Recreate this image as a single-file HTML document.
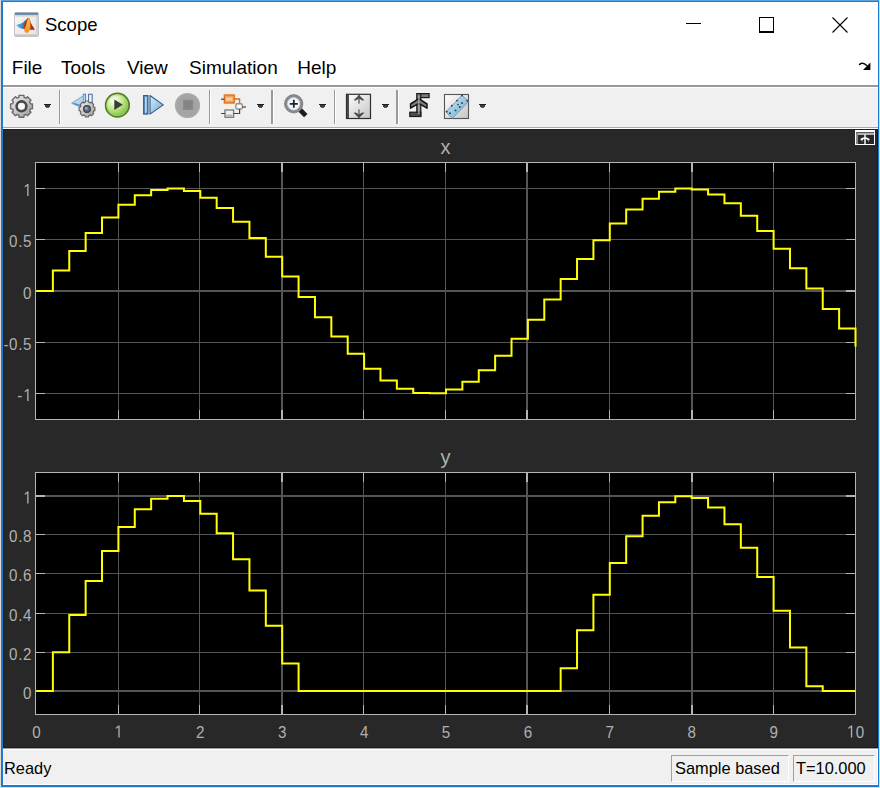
<!DOCTYPE html>
<html><head><meta charset="utf-8">
<style>
html,body{margin:0;padding:0;}
body{width:880px;height:788px;overflow:hidden;position:relative;background:#e3d9d0;font-family:"Liberation Sans",sans-serif;}
.a{position:absolute;}
.t{position:absolute;white-space:nowrap;color:#000;line-height:1;}
</style></head><body>
<div class="a" style="left:1px;top:0;width:878px;height:787px;background:#1a7ad4"></div>
<div class="a" style="left:1px;top:0;width:878px;height:1px;background:#5aa2e2"></div>
<div class="a" style="left:3px;top:2px;width:875px;height:783px;background:#fff"></div>
<!-- menu separator -->
<div class="a" style="left:3px;top:85px;width:875px;height:2px;background:#9a9a9a"></div>
<div class="a" style="left:3px;top:88px;width:875px;height:39px;background:#f0f0f0"></div>
<div class="a" style="left:3px;top:127px;width:875px;height:1px;background:#a8a8a8"></div>
<!-- scope panel -->
<div class="a" style="left:3px;top:129px;width:875px;height:619px;background:#1e1b18"></div>
<div class="a" style="left:4px;top:130px;width:873px;height:617px;background:#282828"></div>
<!-- status -->
<div class="a" style="left:3px;top:748px;width:875px;height:1px;background:#a0a0a0"></div>
<div class="a" style="left:3px;top:750px;width:874px;height:34px;background:#f0f0f0"></div>
<svg id="plot" width="880" height="788" viewBox="0 0 880 788" style="position:absolute;left:0;top:0">
<g shape-rendering="crispEdges">
<rect x="35" y="162" width="821" height="258" fill="#000"/>
<rect x="118" y="163" width="1" height="256" fill="#555555"/>
<rect x="199" y="163" width="1" height="256" fill="#555555"/>
<rect x="281" y="163" width="2" height="256" fill="#555555"/>
<rect x="363" y="163" width="1" height="256" fill="#555555"/>
<rect x="445" y="163" width="1" height="256" fill="#555555"/>
<rect x="526" y="163" width="2" height="256" fill="#555555"/>
<rect x="609" y="163" width="1" height="256" fill="#555555"/>
<rect x="691" y="163" width="2" height="256" fill="#555555"/>
<rect x="773" y="163" width="1" height="256" fill="#555555"/>
<rect x="36" y="188" width="819" height="1" fill="#555555"/>
<rect x="36" y="239" width="819" height="1" fill="#555555"/>
<rect x="36" y="290" width="819" height="2" fill="#555555"/>
<rect x="36" y="342" width="819" height="1" fill="#555555"/>
<rect x="36" y="393" width="819" height="1" fill="#555555"/>
<rect x="118" y="163" width="1" height="9" fill="#b4b4b4"/>
<rect x="118" y="410" width="1" height="9" fill="#b4b4b4"/>
<rect x="199" y="163" width="1" height="9" fill="#b4b4b4"/>
<rect x="199" y="410" width="1" height="9" fill="#b4b4b4"/>
<rect x="281" y="163" width="2" height="9" fill="#b4b4b4"/>
<rect x="281" y="410" width="2" height="9" fill="#b4b4b4"/>
<rect x="363" y="163" width="1" height="9" fill="#b4b4b4"/>
<rect x="363" y="410" width="1" height="9" fill="#b4b4b4"/>
<rect x="445" y="163" width="1" height="9" fill="#b4b4b4"/>
<rect x="445" y="410" width="1" height="9" fill="#b4b4b4"/>
<rect x="526" y="163" width="2" height="9" fill="#b4b4b4"/>
<rect x="526" y="410" width="2" height="9" fill="#b4b4b4"/>
<rect x="609" y="163" width="1" height="9" fill="#b4b4b4"/>
<rect x="609" y="410" width="1" height="9" fill="#b4b4b4"/>
<rect x="691" y="163" width="2" height="9" fill="#b4b4b4"/>
<rect x="691" y="410" width="2" height="9" fill="#b4b4b4"/>
<rect x="773" y="163" width="1" height="9" fill="#b4b4b4"/>
<rect x="773" y="410" width="1" height="9" fill="#b4b4b4"/>
<rect x="36" y="188" width="9" height="1" fill="#b4b4b4"/>
<rect x="846" y="188" width="9" height="1" fill="#b4b4b4"/>
<rect x="36" y="239" width="9" height="1" fill="#b4b4b4"/>
<rect x="846" y="239" width="9" height="1" fill="#b4b4b4"/>
<rect x="36" y="290" width="9" height="2" fill="#b4b4b4"/>
<rect x="846" y="290" width="9" height="2" fill="#b4b4b4"/>
<rect x="36" y="342" width="9" height="1" fill="#b4b4b4"/>
<rect x="846" y="342" width="9" height="1" fill="#b4b4b4"/>
<rect x="36" y="393" width="9" height="1" fill="#b4b4b4"/>
<rect x="846" y="393" width="9" height="1" fill="#b4b4b4"/>
<rect x="35.5" y="162.5" width="820" height="257" fill="none" stroke="#b4b4b4" stroke-width="1"/>

</g>
<path d="M36.50,291.00 H52.88 V270.62 H69.26 V251.05 H85.64 V233.07 H102.02 V217.40 H118.40 V204.67 H134.78 V195.37 H151.16 V189.89 H167.54 V188.44 H183.92 V191.08 H200.30 V197.71 H216.68 V208.05 H233.06 V221.70 H249.44 V238.11 H265.82 V256.63 H282.20 V276.52 H298.58 V296.99 H314.96 V317.22 H331.34 V336.40 H347.72 V353.78 H364.10 V368.65 H380.48 V380.42 H396.86 V388.63 H413.24 V392.95 H429.62 V393.21 H446.00 V389.39 H462.38 V381.64 H478.76 V370.29 H495.14 V355.77 H511.52 V338.67 H527.90 V319.67 H544.28 V299.52 H560.66 V279.04 H577.04 V259.04 H593.42 V240.30 H609.80 V223.59 H626.18 V209.57 H642.56 V198.79 H658.94 V191.69 H675.32 V188.55 H691.70 V189.49 H708.08 V194.48 H724.46 V203.32 H740.84 V215.65 H757.22 V230.99 H773.60 V248.72 H789.98 V268.13 H806.36 V288.46 H822.74 V308.89 H839.12 V328.60 H855.50 V346.82" fill="none" stroke="#ffff00" stroke-width="2" stroke-linejoin="miter"/>
<g shape-rendering="crispEdges">
<rect x="35" y="472" width="821" height="243" fill="#000"/>
<rect x="118" y="473" width="1" height="241" fill="#555555"/>
<rect x="199" y="473" width="1" height="241" fill="#555555"/>
<rect x="281" y="473" width="2" height="241" fill="#555555"/>
<rect x="363" y="473" width="1" height="241" fill="#555555"/>
<rect x="445" y="473" width="1" height="241" fill="#555555"/>
<rect x="526" y="473" width="2" height="241" fill="#555555"/>
<rect x="609" y="473" width="1" height="241" fill="#555555"/>
<rect x="691" y="473" width="2" height="241" fill="#555555"/>
<rect x="773" y="473" width="1" height="241" fill="#555555"/>
<rect x="36" y="495" width="819" height="2" fill="#555555"/>
<rect x="36" y="534" width="819" height="1" fill="#555555"/>
<rect x="36" y="573" width="819" height="1" fill="#555555"/>
<rect x="36" y="613" width="819" height="1" fill="#555555"/>
<rect x="36" y="652" width="819" height="1" fill="#555555"/>
<rect x="36" y="690" width="819" height="2" fill="#555555"/>
<rect x="118" y="473" width="1" height="9" fill="#b4b4b4"/>
<rect x="118" y="705" width="1" height="9" fill="#b4b4b4"/>
<rect x="199" y="473" width="1" height="9" fill="#b4b4b4"/>
<rect x="199" y="705" width="1" height="9" fill="#b4b4b4"/>
<rect x="281" y="473" width="2" height="9" fill="#b4b4b4"/>
<rect x="281" y="705" width="2" height="9" fill="#b4b4b4"/>
<rect x="363" y="473" width="1" height="9" fill="#b4b4b4"/>
<rect x="363" y="705" width="1" height="9" fill="#b4b4b4"/>
<rect x="445" y="473" width="1" height="9" fill="#b4b4b4"/>
<rect x="445" y="705" width="1" height="9" fill="#b4b4b4"/>
<rect x="526" y="473" width="2" height="9" fill="#b4b4b4"/>
<rect x="526" y="705" width="2" height="9" fill="#b4b4b4"/>
<rect x="609" y="473" width="1" height="9" fill="#b4b4b4"/>
<rect x="609" y="705" width="1" height="9" fill="#b4b4b4"/>
<rect x="691" y="473" width="2" height="9" fill="#b4b4b4"/>
<rect x="691" y="705" width="2" height="9" fill="#b4b4b4"/>
<rect x="773" y="473" width="1" height="9" fill="#b4b4b4"/>
<rect x="773" y="705" width="1" height="9" fill="#b4b4b4"/>
<rect x="36" y="495" width="9" height="2" fill="#b4b4b4"/>
<rect x="846" y="495" width="9" height="2" fill="#b4b4b4"/>
<rect x="36" y="534" width="9" height="1" fill="#b4b4b4"/>
<rect x="846" y="534" width="9" height="1" fill="#b4b4b4"/>
<rect x="36" y="573" width="9" height="1" fill="#b4b4b4"/>
<rect x="846" y="573" width="9" height="1" fill="#b4b4b4"/>
<rect x="36" y="613" width="9" height="1" fill="#b4b4b4"/>
<rect x="846" y="613" width="9" height="1" fill="#b4b4b4"/>
<rect x="36" y="652" width="9" height="1" fill="#b4b4b4"/>
<rect x="846" y="652" width="9" height="1" fill="#b4b4b4"/>
<rect x="36" y="690" width="9" height="2" fill="#b4b4b4"/>
<rect x="846" y="690" width="9" height="2" fill="#b4b4b4"/>
<rect x="35.5" y="472.5" width="820" height="242" fill="none" stroke="#b4b4b4" stroke-width="1"/>

</g>
<path d="M36.50,691.00 H52.88 V652.26 H69.26 V615.06 H85.64 V580.89 H102.02 V551.12 H118.40 V526.91 H134.78 V509.25 H151.16 V498.84 H167.54 V496.08 H183.92 V501.10 H200.30 V513.69 H216.68 V533.34 H233.06 V559.28 H249.44 V590.48 H265.82 V625.68 H282.20 V663.48 H298.58 V691.00 H314.96 V691.00 H331.34 V691.00 H347.72 V691.00 H364.10 V691.00 H380.48 V691.00 H396.86 V691.00 H413.24 V691.00 H429.62 V691.00 H446.00 V691.00 H462.38 V691.00 H478.76 V691.00 H495.14 V691.00 H511.52 V691.00 H527.90 V691.00 H544.28 V691.00 H560.66 V668.27 H577.04 V630.25 H593.42 V594.65 H609.80 V562.89 H626.18 V536.23 H642.56 V515.75 H658.94 V502.26 H675.32 V496.28 H691.70 V498.08 H708.08 V507.56 H724.46 V524.35 H740.84 V547.79 H757.22 V576.94 H773.60 V610.64 H789.98 V647.54 H806.36 V686.17 H822.74 V691.00 H839.12 V691.00 H855.50 V691.00" fill="none" stroke="#ffff00" stroke-width="2" stroke-linejoin="miter"/>
<g font-family="'Liberation Sans', sans-serif" font-size="16.5" fill="#b0b0b0" stroke="none">
<path transform="translate(23.058,196.00) scale(0.007412,-0.008459)" d="M560,0 L740,0 L740,1409 L585,1409 L230,1180 L230,1010 L560,1225 Z"/>
<text transform="translate(9.110,247.00) scale(0.92,1.05)">0</text><text transform="translate(18.196,247.00) scale(0.92,1.05)">.</text><text transform="translate(23.058,247.00) scale(0.92,1.05)">5</text>
<text transform="translate(23.058,298.50) scale(0.92,1.05)">0</text>
<text transform="translate(3.411,350.00) scale(0.92,1.05)">-</text><text transform="translate(9.110,350.00) scale(0.92,1.05)">0</text><text transform="translate(18.196,350.00) scale(0.92,1.05)">.</text><text transform="translate(23.058,350.00) scale(0.92,1.05)">5</text>
<text transform="translate(17.359,401.00) scale(0.92,1.05)">-</text><path transform="translate(23.058,401.00) scale(0.007412,-0.008459)" d="M560,0 L740,0 L740,1409 L585,1409 L230,1180 L230,1010 L560,1225 Z"/>
<path transform="translate(23.058,503.50) scale(0.007412,-0.008459)" d="M560,0 L740,0 L740,1409 L585,1409 L230,1180 L230,1010 L560,1225 Z"/>
<text transform="translate(9.110,542.00) scale(0.92,1.05)">0</text><text transform="translate(18.196,542.00) scale(0.92,1.05)">.</text><text transform="translate(23.058,542.00) scale(0.92,1.05)">8</text>
<text transform="translate(9.110,581.00) scale(0.92,1.05)">0</text><text transform="translate(18.196,581.00) scale(0.92,1.05)">.</text><text transform="translate(23.058,581.00) scale(0.92,1.05)">6</text>
<text transform="translate(9.110,620.50) scale(0.92,1.05)">0</text><text transform="translate(18.196,620.50) scale(0.92,1.05)">.</text><text transform="translate(23.058,620.50) scale(0.92,1.05)">4</text>
<text transform="translate(9.110,659.50) scale(0.92,1.05)">0</text><text transform="translate(18.196,659.50) scale(0.92,1.05)">.</text><text transform="translate(23.058,659.50) scale(0.92,1.05)">2</text>
<text transform="translate(23.058,698.50) scale(0.92,1.05)">0</text>
<text transform="translate(32.279,737.50) scale(0.92,1.05)">0</text>
<path transform="translate(114.179,737.50) scale(0.007412,-0.008459)" d="M560,0 L740,0 L740,1409 L585,1409 L230,1180 L230,1010 L560,1225 Z"/>
<text transform="translate(196.079,737.50) scale(0.92,1.05)">2</text>
<text transform="translate(277.979,737.50) scale(0.92,1.05)">3</text>
<text transform="translate(359.879,737.50) scale(0.92,1.05)">4</text>
<text transform="translate(441.779,737.50) scale(0.92,1.05)">5</text>
<text transform="translate(523.679,737.50) scale(0.92,1.05)">6</text>
<text transform="translate(605.579,737.50) scale(0.92,1.05)">7</text>
<text transform="translate(687.479,737.50) scale(0.92,1.05)">8</text>
<text transform="translate(769.379,737.50) scale(0.92,1.05)">9</text>
<path transform="translate(846.736,737.50) scale(0.007412,-0.008459)" d="M560,0 L740,0 L740,1409 L585,1409 L230,1180 L230,1010 L560,1225 Z"/><text transform="translate(855.822,737.50) scale(0.92,1.05)">0</text>
<text x="445.5" y="154" text-anchor="middle" font-size="20">x</text>
<text x="445.5" y="464" text-anchor="middle" font-size="20">y</text>
</g>
</svg>
<!-- title bar -->
<svg class="a" style="left:14px;top:12px" width="25" height="25" viewBox="0 0 25 25">
  <defs>
    <linearGradient id="wbody" x1="0" y1="0" x2="1" y2="1"><stop offset="0" stop-color="#fafafa"/><stop offset="1" stop-color="#e0e0e0"/></linearGradient>
    <linearGradient id="wtop" x1="0" y1="0" x2="0" y2="1"><stop offset="0" stop-color="#4a76a0"/><stop offset="1" stop-color="#88a8c4"/></linearGradient>
    <linearGradient id="mblue" x1="0" y1="0" x2="1" y2="0"><stop offset="0" stop-color="#70b8ea"/><stop offset="0.6" stop-color="#3a88cc"/><stop offset="1" stop-color="#2a62a8"/></linearGradient>
    <linearGradient id="morange" x1="0" y1="0" x2="0" y2="1"><stop offset="0" stop-color="#f8c040"/><stop offset="1" stop-color="#f09020"/></linearGradient>
  </defs>
  <rect x="0.5" y="0.5" width="24" height="24" rx="1.2" fill="url(#wbody)" stroke="#c4c4c4"/>
  <rect x="1" y="0.8" width="23" height="2.6" fill="url(#wtop)"/>
  <rect x="1" y="3.4" width="23" height="1.2" fill="#d2d2d2"/>
  <rect x="1" y="22.4" width="23" height="1.8" fill="#c6c6c6"/>
  <rect x="22" y="4.6" width="2" height="17.8" fill="#d4d4d4"/>
  <path d="M2.3,13.5 C3.5,12.5 5,12 7,11.5 C8.5,11 10,9.5 11.8,8 L12.8,8 L12.8,15.8 C11,16.6 9.5,17 8,16.8 C6,16.3 4,15 2.3,13.5Z" fill="url(#mblue)"/>
  <path d="M9,16.2 C10,13 11,10 12.5,7.5 C13,6.5 13.8,5.8 14.5,5.8 C15.5,6 16,8 16.8,10.5 C17.5,12.5 18.5,14 19.5,15.5 C20,16.3 20.3,17 20.5,17.8 C19.5,17.5 18.5,17.2 17.5,17.5 C16.5,18 15.5,18 14.5,18 C12,18 10.5,17.5 9,16.2Z" fill="#c03a1c"/>
  <path d="M11,12 C11.8,9.5 12.8,7 13.8,6 L13.6,15 L10.5,15.5Z" fill="#9a2a1a"/>
  <path d="M12.5,11 C13,8.5 13.8,6.2 14.6,6 C15.8,7.5 16.4,10.5 16.5,13.5 C16.5,16 16,18 15,19.5 C14.5,20.5 13.5,21 12.5,20.8 C10.8,20.5 10.2,19.5 10.3,18 C10.8,16 12,14 12.5,11Z" fill="url(#morange)"/>
  <path d="M16.8,11 C17.5,13 18.5,14.5 19.5,15.8 C20,16.5 20.3,17.2 20.5,17.8 C19.5,17.5 18.2,17.2 17,17.6Z" fill="#b02a18"/>
</svg>
<div class="t" style="left:45px;top:16.3px;font-size:18.5px">Scope</div>
<div class="a" style="left:686px;top:23px;width:15px;height:1px;background:#000"></div>
<div class="a" style="left:759px;top:17px;width:13px;height:13px;border:1px solid #000;border-bottom-width:2px"></div>
<svg class="a" style="left:832px;top:17px" width="16" height="16" viewBox="0 0 16 16"><path d="M0.5,0.5 L15.5,15.5 M15.5,0.5 L0.5,15.5" stroke="#000" stroke-width="1.1" fill="none"/></svg>
<!-- menu -->
<div class="t" style="left:11.8px;top:58px;font-size:19px">File</div>
<div class="t" style="left:61px;top:58px;font-size:19px">Tools</div>
<div class="t" style="left:127px;top:58px;font-size:19px">View</div>
<div class="t" style="left:189px;top:58px;font-size:19px">Simulation</div>
<div class="t" style="left:297.2px;top:58px;font-size:19px">Help</div>
<svg class="a" style="left:856px;top:58px" width="18" height="16" viewBox="856 58 18 16"><path d="M859.3,65 C860.5,62.8 863.5,62.3 867,65.8" stroke="#000" stroke-width="1.6" fill="none"/><path d="M870.4,62.4 L870.4,70 L863,70 Z" fill="#000"/></svg>
<!-- status bar -->
<div class="t" style="left:4px;top:759.8px;font-size:16.4px">Ready</div>
<div class="a" style="left:671px;top:755px;width:118px;height:27px;border-top:1px solid #a0a0a0;border-left:1px solid #a0a0a0;border-bottom:1px solid #fff;border-right:1px solid #fff;box-sizing:border-box"></div>
<div class="t" style="left:675px;top:759.8px;font-size:16.4px">Sample based</div>
<div class="a" style="left:793px;top:755px;width:82px;height:27px;border-top:1px solid #a0a0a0;border-left:1px solid #a0a0a0;border-bottom:1px solid #fff;border-right:1px solid #fff;box-sizing:border-box"></div>
<div class="t" style="left:796px;top:759.8px;font-size:16.4px">T=10.000</div>
<!-- undock icon -->
<svg class="a" style="left:850px;top:126px" width="28" height="22" viewBox="850 126 28 22" shape-rendering="crispEdges">
<rect x="855" y="130" width="20" height="15" fill="#ffffff"/>
<rect x="856" y="132" width="18" height="12" fill="#282828"/>
<rect x="856" y="132" width="18" height="1" fill="#585858"/>
<rect x="856" y="133" width="18" height="2" fill="#b2b2b2"/>
<rect x="856" y="133" width="2" height="11" fill="#8a8a8a"/>
<rect x="864" y="134" width="2" height="10" fill="#c4c4c4"/>
<rect x="862" y="141" width="1" height="1" fill="#707070"/>
<rect x="868" y="141" width="1" height="1" fill="#707070"/>
</svg>
<svg class="a" style="left:850px;top:126px" width="28" height="22" viewBox="850 126 28 22">
<path d="M861.5,140 C862.5,137.5 867.5,137.5 868.5,140" fill="none" stroke="#fff" stroke-width="1.7"/>
<circle cx="861.6" cy="139.4" r="1.1" fill="#fff"/><circle cx="868.6" cy="139.6" r="1" fill="#f0f0f0"/>
</svg>
<svg class="a" style="left:0;top:0" width="500" height="128" viewBox="0 0 500 128">
<defs>
  <linearGradient id="gGear" x1="0" y1="0" x2="1" y2="1"><stop offset="0" stop-color="#f2f2f2"/><stop offset="0.5" stop-color="#c8c8c8"/><stop offset="1" stop-color="#9a9a9a"/></linearGradient>
  <radialGradient id="gPlay" cx="0.35" cy="0.3" r="0.75"><stop offset="0" stop-color="#ffffff"/><stop offset="0.45" stop-color="#c8ec90"/><stop offset="1" stop-color="#74b83a"/></radialGradient>
  <linearGradient id="gBlue" x1="0" y1="0" x2="1" y2="1"><stop offset="0" stop-color="#d8eefa"/><stop offset="1" stop-color="#6aa8d8"/></linearGradient>
  <linearGradient id="gOr" x1="0" y1="0" x2="0" y2="1"><stop offset="0" stop-color="#f8c890"/><stop offset="1" stop-color="#e88840"/></linearGradient>
  <linearGradient id="gBox" x1="0" y1="0" x2="1" y2="1"><stop offset="0" stop-color="#ffffff"/><stop offset="1" stop-color="#c4c4c4"/></linearGradient>
  <linearGradient id="gRuler" x1="0" y1="0" x2="1" y2="1"><stop offset="0" stop-color="#d6eefa"/><stop offset="1" stop-color="#5ea6d6"/></linearGradient>
</defs>
<!-- separators -->
<g shape-rendering="crispEdges">
<rect x="59" y="90" width="1" height="34" fill="#9a9a9a"/><rect x="60" y="90" width="1" height="34" fill="#fff"/>
<rect x="209" y="90" width="1" height="34" fill="#9a9a9a"/><rect x="210" y="90" width="1" height="34" fill="#fff"/>
<rect x="271" y="90" width="2" height="34" fill="#9a9a9a"/><rect x="273" y="90" width="1" height="34" fill="#fff"/>
<rect x="334" y="90" width="1" height="34" fill="#9a9a9a"/><rect x="335" y="90" width="1" height="34" fill="#fff"/>
<rect x="396" y="90" width="2" height="34" fill="#9a9a9a"/><rect x="398" y="90" width="1" height="34" fill="#fff"/>
</g>
<!-- dropdown arrows -->
<g shape-rendering="crispEdges">
<rect x="44" y="104" width="7" height="1" fill="#1e1e1e"/><rect x="45" y="105" width="5" height="2" fill="#3a3a3a"/><rect x="46" y="107" width="3" height="1" fill="#5a5a5a"/>
<rect x="257" y="104" width="7" height="1" fill="#1e1e1e"/><rect x="258" y="105" width="5" height="2" fill="#3a3a3a"/><rect x="259" y="107" width="3" height="1" fill="#5a5a5a"/>
<rect x="319" y="104" width="7" height="1" fill="#1e1e1e"/><rect x="320" y="105" width="5" height="2" fill="#3a3a3a"/><rect x="321" y="107" width="3" height="1" fill="#5a5a5a"/>
<rect x="382" y="104" width="7" height="1" fill="#1e1e1e"/><rect x="383" y="105" width="5" height="2" fill="#3a3a3a"/><rect x="384" y="107" width="3" height="1" fill="#5a5a5a"/>
<rect x="479" y="104" width="7" height="1" fill="#1e1e1e"/><rect x="480" y="105" width="5" height="2" fill="#3a3a3a"/><rect x="481" y="107" width="3" height="1" fill="#5a5a5a"/>
</g>
<!-- gear -->
<path d="M18.91,97.37 L19.06,95.37 L23.94,95.37 L24.09,97.37 L25.98,98.15 L27.50,96.84 L30.96,100.30 L29.65,101.82 L30.43,103.71 L32.43,103.86 L32.43,108.74 L30.43,108.89 L29.65,110.78 L30.96,112.30 L27.50,115.76 L25.98,114.45 L24.09,115.23 L23.94,117.23 L19.06,117.23 L18.91,115.23 L17.02,114.45 L15.50,115.76 L12.04,112.30 L13.35,110.78 L12.57,108.89 L10.57,108.74 L10.57,103.86 L12.57,103.71 L13.35,101.82 L12.04,100.30 L15.50,96.84 L17.02,98.15Z" fill="url(#gGear)" stroke="#6a6a6a" stroke-width="1.4" stroke-linejoin="round"/>
<circle cx="21.5" cy="106.3" r="4.9" fill="none" stroke="#4a4a4a" stroke-width="2.6"/>
<circle cx="21.5" cy="106.3" r="3.3" fill="#f8f8f8"/>
<!-- step back -->
<rect x="83.4" y="94.2" width="2.2" height="10" fill="#c0dcf0" stroke="#4a78a8" stroke-width="0.9"/>
<rect x="88.6" y="94.2" width="3.6" height="10" fill="#cce4f6" stroke="#3a689a" stroke-width="0.9"/>
<rect x="89.6" y="95.5" width="1.4" height="8" fill="#f0f8ff"/>
<path d="M71.6,103.2 L83.4,95.6 L83.4,108.4 Z" fill="#b4d6f0" stroke="#78a4cc" stroke-width="0.9" stroke-linejoin="round"/>
<path d="M73.5,103.4 L83,106.5 L83,108" fill="none" stroke="#5a88b8" stroke-width="1.2"/>
<path d="M85.07,102.37 L85.36,101.07 L88.64,101.07 L88.93,102.37 L90.32,102.95 L91.45,102.23 L93.77,104.55 L93.05,105.68 L93.63,107.07 L94.93,107.36 L94.93,110.64 L93.63,110.93 L93.05,112.32 L93.77,113.45 L91.45,115.77 L90.32,115.05 L88.93,115.63 L88.64,116.93 L85.36,116.93 L85.07,115.63 L83.68,115.05 L82.55,115.77 L80.23,113.45 L80.95,112.32 L80.37,110.93 L79.07,110.64 L79.07,107.36 L80.37,107.07 L80.95,105.68 L80.23,104.55 L82.55,102.23 L83.68,102.95Z" fill="url(#gGear)" stroke="#5e5e5e" stroke-width="1.1" stroke-linejoin="round"/>
<circle cx="87" cy="109" r="3.4" fill="#5a6c80" stroke="#404040" stroke-width="1.2"/>
<circle cx="86.3" cy="108.4" r="1.3" fill="#9ab4cc"/>
<!-- play -->
<circle cx="117.4" cy="105.2" r="11.8" fill="url(#gPlay)" stroke="#507c28" stroke-width="1.6"/>
<circle cx="117.4" cy="105.2" r="10.3" fill="none" stroke="#a4d070" stroke-width="0.8" opacity="0.6"/>
<path d="M114.3,99.5 L122.8,104.8 L114.3,110 Z" fill="#3a3a3a"/>
<!-- step forward -->
<rect x="143.6" y="95.5" width="4.4" height="18.6" fill="#5a8ab8" stroke="#2e5a88" stroke-width="1"/>
<rect x="145.2" y="96.8" width="1.4" height="16" fill="#cfe8f8"/>
<path d="M150,95.5 L163.3,104.9 L150,114.1 Z" fill="url(#gBlue)" stroke="#2e5a88" stroke-width="1.1" stroke-linejoin="round"/>
<!-- stop -->
<circle cx="187.5" cy="105.5" r="12.6" fill="#aaaaaa"/>
<circle cx="187.5" cy="105.5" r="11" fill="#a4a4a4"/>
<rect x="183" y="99.8" width="10.2" height="10.2" fill="#8a8a8a"/>
<rect x="184.5" y="101.3" width="7.2" height="7.2" fill="#848484"/>
<!-- highlight simulink block -->
<rect x="222.8" y="93.6" width="13.2" height="11" rx="2" fill="#ffe9a8"/>
<rect x="224.4" y="95" width="9.8" height="8" fill="#f0a058" stroke="#dc7028" stroke-width="1.3"/>
<rect x="226" y="97.4" width="6.6" height="3.2" fill="#f8d0a8"/>
<path d="M221,99.2 H224.4" stroke="#444" stroke-width="1.2"/>
<path d="M234.2,99 H239.6 V103.6" fill="none" stroke="#d86a20" stroke-width="1.3"/>
<rect x="235.8" y="103.8" width="6.6" height="5.2" rx="1.6" fill="#f6f6f6" stroke="#909090" stroke-width="1.4"/>
<rect x="238.6" y="105" width="2.2" height="2.8" fill="#fff"/>
<path d="M242.4,107 H246" stroke="#444" stroke-width="1.2"/>
<rect x="225" y="110" width="8.6" height="7.3" fill="#f0f0f0" stroke="#808080" stroke-width="1.4"/>
<rect x="226" y="114.6" width="6.6" height="2" fill="#b4b4b4"/>
<path d="M221,113.5 H225 M233.6,113.5 H239.6 V109" fill="none" stroke="#444" stroke-width="1.2"/>
<!-- zoom -->
<path d="M300.2,110 L305.8,115.6" stroke="#202020" stroke-width="4.8"/>
<circle cx="293.7" cy="103.8" r="7.8" fill="#f2f6fa" stroke="#8a8a8a" stroke-width="2.9"/>
<circle cx="293.7" cy="103.8" r="9.25" fill="none" stroke="#6a6a6a" stroke-width="0.6"/>
<circle cx="293.7" cy="103.8" r="6.1" fill="none" stroke="#c4d6e6" stroke-width="0.9"/>
<path d="M289.8,103.8 H297.8 M293.8,99.8 V107.8" stroke="#222" stroke-width="1.8"/>
<!-- scale -->
<rect x="346.5" y="94.3" width="24" height="24.2" fill="url(#gBox)" stroke="#2e2e2e" stroke-width="1.2"/>
<rect x="347.1" y="95" width="1.8" height="23" fill="#3a3a3a"/>
<rect x="358" y="95" width="2" height="8.6" fill="#8a8a8a"/>
<path d="M353.6,100.2 L359,94.9 L364.4,100.2 L362.2,100.6 L359,98.6 L355.8,100.6Z" fill="#4a4a4a"/>
<rect x="358" y="109.4" width="2" height="8.6" fill="#8a8a8a"/>
<path d="M353.6,112.8 L359,118.1 L364.4,112.8 L362.2,112.4 L359,114.4 L355.8,112.4Z" fill="#4a4a4a"/>
<!-- trigger -->
<rect x="417.5" y="93.6" width="11.6" height="4" fill="#7a7a7a" stroke="#1a1a1a" stroke-width="1.2"/>
<rect x="416.8" y="93.6" width="4" height="22.4" fill="#7a7a7a" stroke="#1a1a1a" stroke-width="1.2"/>
<path d="M410.6,108.2 V104 L418.8,98.6 L427,104 V108.2 L418.8,103.4 Z" fill="#7c7c7c" stroke="#161616" stroke-width="1.5" stroke-linejoin="round"/>
<rect x="409.8" y="112.2" width="11" height="4.3" fill="#4e4e4e" stroke="#1a1a1a" stroke-width="1.2"/>
<rect x="418.2" y="95.5" width="1.3" height="18.5" fill="#a8a8a8"/>
<!-- measurement -->
<rect x="444.5" y="94.5" width="24" height="24" fill="url(#gBox)" stroke="#555" stroke-width="1.1"/>
<path d="M446,111.8 L462,95.3 L468.6,101.6 L452.2,118.6 Z" fill="url(#gRuler)" stroke="#6a8aa0" stroke-width="0.8" stroke-linejoin="round"/>
<g fill="#3a3a3a"><circle cx="451.8" cy="105.8" r="0.95"/><circle cx="457" cy="100.6" r="0.95"/><circle cx="462" cy="95.5" r="0.95"/><circle cx="467.3" cy="100.7" r="0.95"/><circle cx="462" cy="103" r="0.95"/><circle cx="459.8" cy="107" r="0.95"/><circle cx="455.5" cy="110.4" r="0.95"/><circle cx="450" cy="113.2" r="0.95"/><circle cx="446.8" cy="111.6" r="0.95"/><circle cx="458" cy="104.6" r="0.8"/></g>
</svg>

</body></html>
